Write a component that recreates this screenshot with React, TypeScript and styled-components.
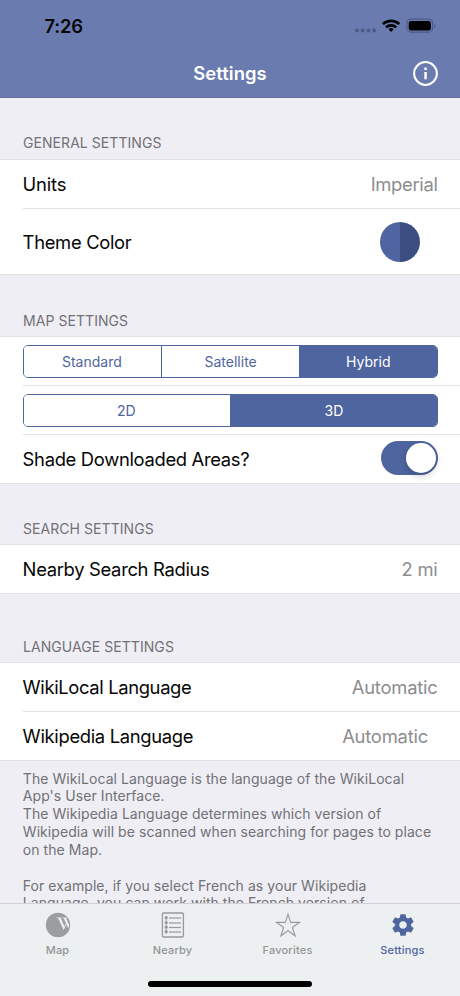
import React from 'react';
import styled, { createGlobalStyle } from 'styled-components';

const ACCENT = '#4f65a0';
const HAIRLINE = '#e2e2e6';

const GlobalStyle = createGlobalStyle`
  * { box-sizing: border-box; }
  body { margin: 0; }
`;

const Screen = styled.div`
  width: 460px;
  height: 996px;
  display: flex;
  flex-direction: column;
  overflow: hidden;
  background: #efeef4;
  font-family: Inter, "Liberation Sans", sans-serif;
  color: #060606;
`;

const Header = styled.header`
  flex: none;
  height: 98px;
  background: #6a7baf;
  border-bottom: 1px solid #6373a6;
`;

const StatusBar = styled.div`
  height: 50px;
  display: flex;
  align-items: center;
  justify-content: space-between;
  padding: 1px 23px 0 44.5px;
`;

const Clock = styled.span`
  font-size: 18.4px;
  font-weight: 600;
  letter-spacing: -0.2px;
`;

const StatusIcons = styled.svg`
  display: block;
`;

const NavBar = styled.div`
  height: 46px;
  display: grid;
  grid-template-columns: 1fr auto 1fr;
  align-items: center;
  padding: 0 21px;
`;

const Title = styled.h1`
  grid-column: 2;
  margin: 0;
  color: #fff;
  font-size: 18.4px;
  font-weight: 600;
  letter-spacing: 0.05px;
`;

const InfoButton = styled.button`
  justify-self: end;
  display: block;
  padding: 0;
  border: 0;
  background: none;
`;

const Content = styled.main`
  flex: 1;
  min-height: 0;
  overflow: hidden;
`;

const SectionTitle = styled.h2<{ $height: number; $bottom?: number }>`
  height: ${(p) => p.$height}px;
  margin: 0;
  padding: 0 23px ${(p) => p.$bottom ?? 6}px;
  display: flex;
  align-items: flex-end;
  font-size: 14px;
  line-height: 18px;
  font-weight: 400;
  letter-spacing: 0.06px;
  text-transform: uppercase;
  color: #717176;
`;

const Group = styled.section`
  background: #fff;
  border-top: 1px solid ${HAIRLINE};
  border-bottom: 1px solid ${HAIRLINE};
  padding-left: 22.6px;
`;

const Row = styled.div<{ $height: number; $inset?: number }>`
  height: ${(p) => p.$height}px;
  display: flex;
  align-items: center;
  justify-content: space-between;
  padding-right: ${(p) => p.$inset ?? 22.4}px;
  & + & { border-top: 1px solid ${HAIRLINE}; }
`;

const Label = styled.span<{ $track?: number }>`
  font-size: 18.4px;
  letter-spacing: ${(p) => p.$track ?? -0.32}px;
`;

const Value = styled(Label)`
  color: #8d8d8f;
`;

const Swatch = styled.span`
  width: 40px;
  height: 40px;
  margin-right: 17.6px;
  border-radius: 50%;
  background: linear-gradient(90deg, #5064a1 50%, #3b4d81 50%);
`;

const Segments = styled.div`
  flex: 1;
  height: 33px;
  display: flex;
  border: 1px solid ${ACCENT};
  border-radius: 5px;
  overflow: hidden;
`;

const Segment = styled.button<{ $active?: boolean }>`
  flex: 1;
  padding: 0 1px 0 0;
  border: 0;
  background: ${(p) => (p.$active ? ACCENT : '#fff')};
  color: ${(p) => (p.$active ? '#fff' : ACCENT)};
  font: 400 14px Inter, sans-serif;
  letter-spacing: 0.02px;
  & + & {
    padding: 0;
    border-left: 1px solid ${ACCENT};
  }
`;

const Switch = styled.span`
  width: 57px;
  height: 34px;
  padding: 2px;
  display: flex;
  justify-content: flex-end;
  border-radius: 17px;
  background: ${ACCENT};
  margin: -2px -0.6px 0 0;
`;

const Knob = styled.span`
  width: 30px;
  height: 30px;
  border-radius: 50%;
  background: #fff;
  box-shadow: 0 3px 7px rgba(0, 0, 0, 0.2);
`;

const Footnote = styled.div`
  padding: 8.5px 0 0 22.8px;
  font-size: 14px;
  line-height: 17.85px;
  letter-spacing: 0.065px;
  color: #717176;
  white-space: nowrap;
`;

const Line = styled.div`
  height: 17.85px;
`;

const TabBar = styled.nav`
  flex: none;
  height: 93px;
  display: flex;
  flex-direction: column;
  align-items: center;
  background: #ecf0f1;
  border-top: 1px solid #cfd1d3;
`;

const Tabs = styled.div`
  width: 100%;
  height: 80px;
  display: grid;
  grid-template-columns: repeat(4, 1fr);
  flex: none;
`;

const Tab = styled.div<{ $active?: boolean }>`
  display: flex;
  flex-direction: column;
  align-items: center;
  padding-top: 7.5px;
  gap: 5.4px;
  color: ${(p) => (p.$active ? ACCENT : '#929596')};
  font-size: 11px;
  line-height: 14px;
  font-weight: 500;
  letter-spacing: 0.2px;
  svg { display: block; }
`;

const HomeIndicator = styled.div`
  width: 164px;
  height: 6px;
  margin-top: -3px;
  border-radius: 3px;
  background: #000;
  flex: none;
`;

const MapIcon = () => (
  <svg width="26" height="26" viewBox="0 0 26 26">
    <circle cx="13" cy="13" r="12.2" fill="#9b9e9f" />
    <path d="M11.8 5.4h5v.8h-1l3.9 8.9-1.2 2.6-5.3-11.5h-1.4z" fill="#ecf0f1" />
    <path d="M17.7 5.4h4.6v.8h-1.1l3 7-1 3.4-4.5-10.4h-1z" fill="#ecf0f1" />
    <path d="M18.5 17.4l2.4-5.4" stroke="#ecf0f1" strokeWidth="0.9" />
  </svg>
);

const NearbyIcon = () => (
  <svg width="26" height="26" viewBox="0 0 26 26" fill="none" stroke="#97999a">
    <rect x="2.4" y="1" width="21" height="24" rx="1.2" strokeWidth="1.3" />
    {[5.7, 10.7, 15.2, 19.7].map((y) => (
      <React.Fragment key={y}>
        <circle cx="6.2" cy={y} r="1.6" fill="#97999a" stroke="none" />
        <path d={`M9 ${y + 0.3}h12`} strokeWidth="1.2" />
      </React.Fragment>
    ))}
    <path d="M6.2 4v18" strokeWidth="0.8" />
  </svg>
);

const StarIcon = () => (
  <svg width="26" height="26" viewBox="0 0 26 26" fill="none" stroke="#97999a" strokeWidth="1.1">
    <path d="M13 2.2l2.7 8.2h8.7l-7 5.1 2.7 8.3-7.1-5.1-7.1 5.1 2.7-8.3-7-5.1h8.7z" />
  </svg>
);

const GearIcon = () => (
  <svg width="26" height="26" viewBox="0 0 24 24" fill={ACCENT}>
    <path d="M19.43 12.98c.04-.32.07-.64.07-.98s-.03-.66-.07-.98l2.11-1.65c.19-.15.24-.42.12-.64l-2-3.46c-.12-.22-.39-.3-.61-.22l-2.49 1c-.52-.4-1.08-.73-1.69-.98l-.38-2.65C14.46 2.18 14.25 2 14 2h-4c-.25 0-.46.18-.49.42l-.38 2.65c-.61.25-1.17.59-1.69.98l-2.49-1c-.23-.09-.49 0-.61.22l-2 3.46c-.13.22-.07.49.12.64l2.11 1.65c-.04.32-.07.65-.07.98s.03.66.07.98l-2.11 1.65c-.19.15-.24.42-.12.64l2 3.46c.12.22.39.3.61.22l2.49-1c.52.4 1.08.73 1.69.98l.38 2.65c.03.24.24.42.49.42h4c.25 0 .46-.18.49-.42l.38-2.65c.61-.25 1.17-.59 1.69-.98l2.49 1c.23.09.49 0 .61-.22l2-3.46c.12-.22.07-.49-.12-.64l-2.11-1.65zM12 15.5c-1.93 0-3.5-1.57-3.5-3.5s1.57-3.5 3.5-3.5 3.5 1.57 3.5 3.5-1.57 3.5-3.5 3.5z" />
  </svg>
);

export default function App() {
  return (
    <Screen>
      <GlobalStyle />
      <Header>
        <StatusBar>
          <Clock>7:26</Clock>
          <StatusIcons width="84" height="20" viewBox="353 15.5 84 20">
            <g fill="#4d5a86">
              <circle cx="357" cy="30" r="1.9" />
              <circle cx="362.7" cy="30" r="1.9" />
              <circle cx="368.4" cy="30" r="1.9" />
              <circle cx="374" cy="30" r="1.9" />
            </g>
            <g fill="none" stroke="#000" strokeWidth="2.7">
              <path d="M382.9 23.6a11.8 11.8 0 0 1 16.4 0" />
              <path d="M386 26.9a7.3 7.3 0 0 1 10.2 0" />
            </g>
            <path d="M391.1 31.4l-2.5-2.6a3.6 3.6 0 0 1 5 0z" fill="#000" />
            <rect x="406.9" y="18.6" width="25.8" height="13" rx="3.9" fill="none" stroke="#4d5a86" strokeWidth="1.1" />
            <rect x="408.7" y="20.6" width="22.2" height="9.4" rx="2.3" fill="#000" />
            <path d="M434.1 23.2v4.2c1.7-.8 1.7-3.4 0-4.2z" fill="#4d5a86" />
          </StatusIcons>
        </StatusBar>
        <NavBar>
          <Title>Settings</Title>
          <InfoButton aria-label="About">
            <svg width="27" height="27" viewBox="0 0 27 27" display="block">
              <circle cx="13.5" cy="13.5" r="11.4" fill="none" stroke="#fff" strokeWidth="2" />
              <path d="M12.3 12h2.5v7.2h-2.5zM12.3 7.5h2.5V10h-2.5z" fill="#fff" />
            </svg>
          </InfoButton>
        </NavBar>
      </Header>

      <Content>
        <SectionTitle $height={61} $bottom={7}>General Settings</SectionTitle>
        <Group>
          <Row $height={48}>
            <Label $track={-0.2}>Units</Label>
            <Value>Imperial</Value>
          </Row>
          <Row $height={66}>
            <Label>Theme Color</Label>
            <Swatch />
          </Row>
        </Group>

        <SectionTitle $height={61}>Map Settings</SectionTitle>
        <Group>
          <Row $height={48}>
            <Segments>
              <Segment>Standard</Segment>
              <Segment>Satellite</Segment>
              <Segment $active>Hybrid</Segment>
            </Segments>
          </Row>
          <Row $height={49}>
            <Segments>
              <Segment>2D</Segment>
              <Segment $active>3D</Segment>
            </Segments>
          </Row>
          <Row $height={49}>
            <Label>Shade Downloaded Areas?</Label>
            <Switch><Knob /></Switch>
          </Row>
        </Group>

        <SectionTitle $height={60}>Search Settings</SectionTitle>
        <Group>
          <Row $height={48}>
            <Label>Nearby Search Radius</Label>
            <Value $track={-0.2}>2 mi</Value>
          </Row>
        </Group>

        <SectionTitle $height={68}>Language Settings</SectionTitle>
        <Group>
          <Row $height={48}>
            <Label $track={-0.36}>WikiLocal Language</Label>
            <Value $track={-0.22}>Automatic</Value>
          </Row>
          <Row $height={49} $inset={32}>
            <Label>Wikipedia Language</Label>
            <Value $track={-0.22}>Automatic</Value>
          </Row>
        </Group>
        <Footnote>
          <Line>The WikiLocal Language is the language of the WikiLocal</Line>
          <Line>App's User Interface.</Line>
          <Line>The Wikipedia Language determines which version of</Line>
          <Line>Wikipedia will be scanned when searching for pages to place</Line>
          <Line>on the Map.</Line>
          <Line />
          <Line>For example, if you select French as your Wikipedia</Line>
          <Line>Language, you can work with the French version of</Line>
        </Footnote>
      </Content>

      <TabBar>
        <Tabs>
          <Tab><MapIcon />Map</Tab>
          <Tab><NearbyIcon />Nearby</Tab>
          <Tab><StarIcon />Favorites</Tab>
          <Tab $active><GearIcon />Settings</Tab>
        </Tabs>
        <HomeIndicator />
      </TabBar>
    </Screen>
  );
}
